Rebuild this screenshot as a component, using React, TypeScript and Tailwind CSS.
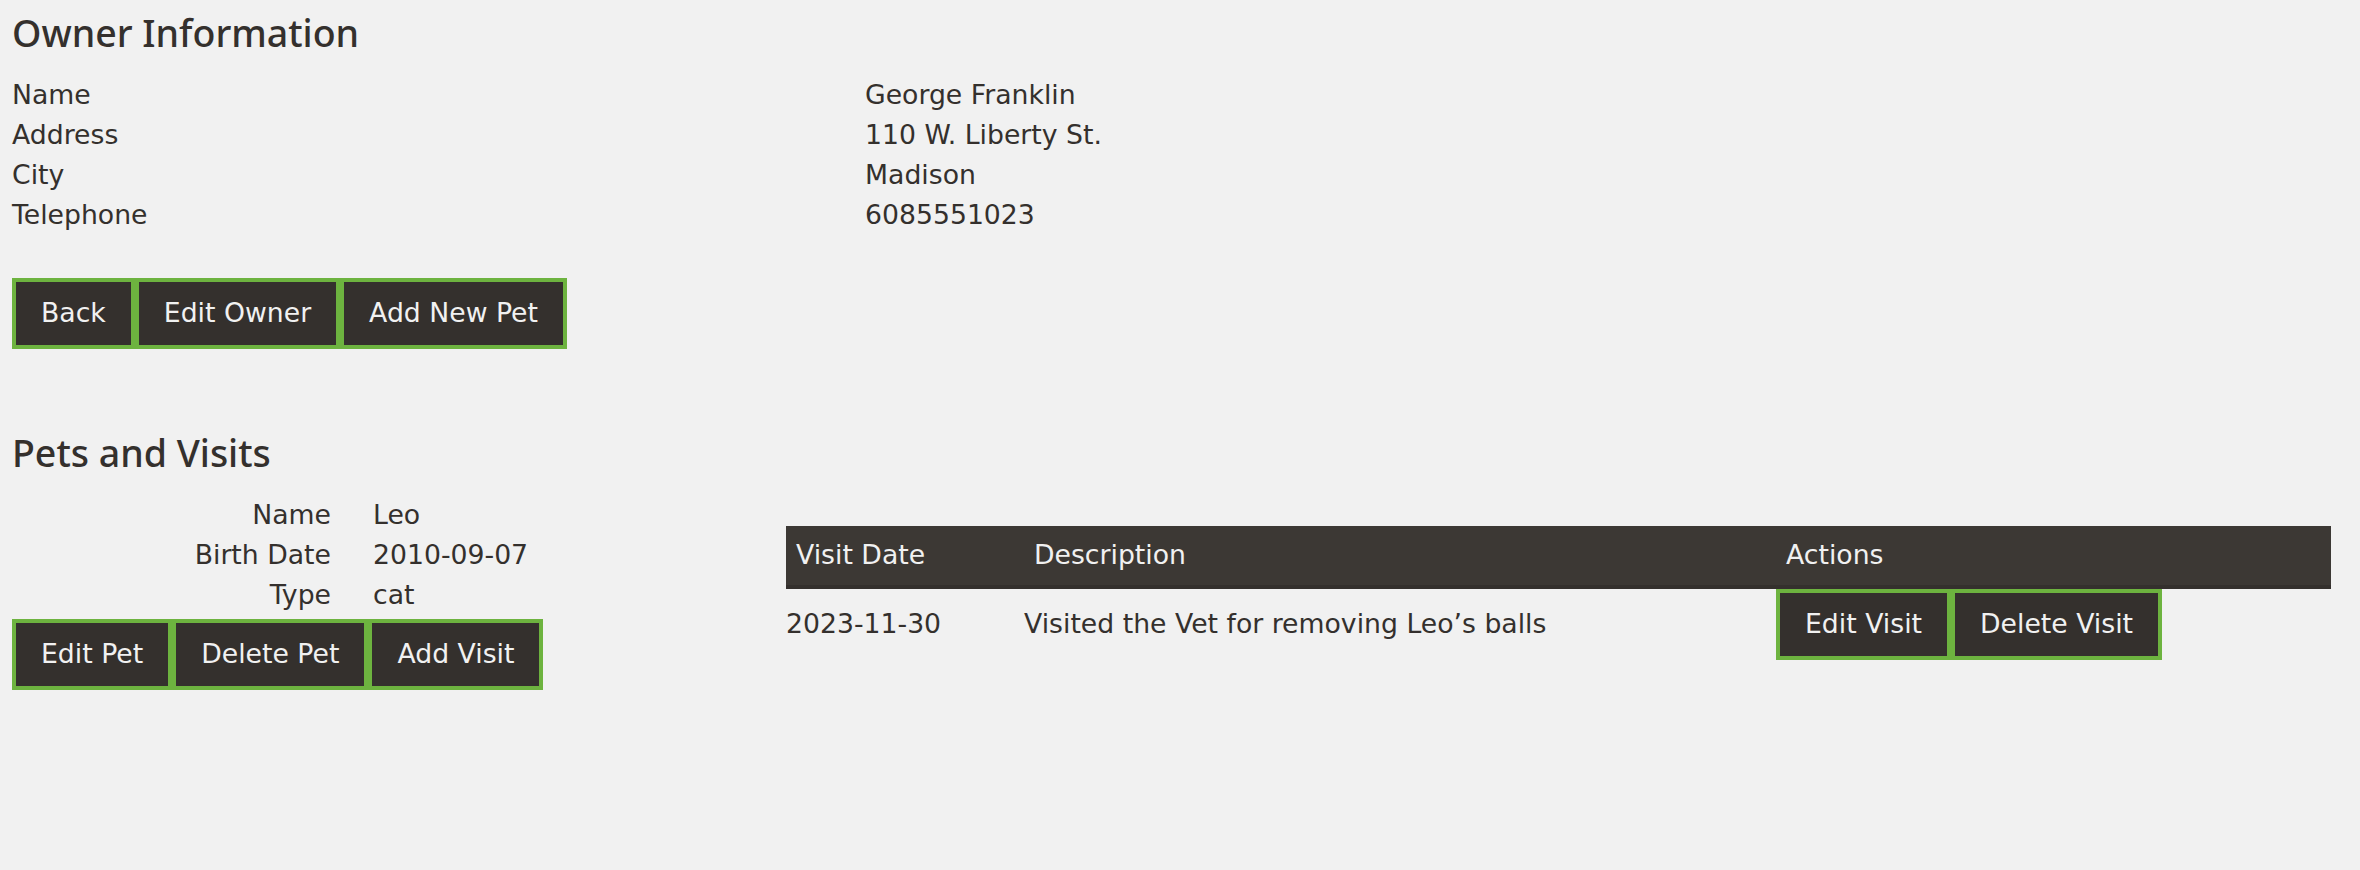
import type { ReactNode } from "react";

const owner = [
  ["Name", "George Franklin"],
  ["Address", "110 W. Liberty St."],
  ["City", "Madison"],
  ["Telephone", "6085551023"],
];

const pet = [
  ["Name", "Leo"],
  ["Birth Date", "2010-09-07"],
  ["Type", "cat"],
];

function Btn({ children }: { children: ReactNode }) {
  return (
    <button className="h-[71px] border-4 border-[#6db33f] bg-[#34302d] px-[25px] leading-none text-[#f1f1f1]">
      {children}
    </button>
  );
}

export default function App() {
  return (
    <div className="min-h-[870px] bg-[#f1f1f1] px-[12px] pt-[13px] font-['DejaVu_Sans',sans-serif] text-[26.7px] text-[#34302d]">
      {/* Owner */}
      <h2 className="font-['Noto_Sans',sans-serif] text-[37.5px] font-medium leading-[40px]">Owner Information</h2>
      <div className="mt-[22px] grid grid-cols-[853px_1fr] leading-[40px]">
        {owner.map(([label, value]) => (
          <div key={label} className="contents">
            <div>{label}</div>
            <div>{value}</div>
          </div>
        ))}
      </div>
      <div className="mt-[43px] flex">
        <Btn>Back</Btn>
        <Btn>Edit Owner</Btn>
        <Btn>Add New Pet</Btn>
      </div>

      {/* Pets and visits */}
      <h2 className="mt-[84px] font-['Noto_Sans',sans-serif] text-[37.5px] font-medium leading-[40px]">Pets and Visits</h2>
      <div className="mt-[22px] flex items-start">
        <div className="w-[774px] shrink-0">
          <div className="grid grid-cols-[319px_1fr] gap-x-[42px] leading-[40px]">
            {pet.map(([label, value]) => (
              <div key={label} className="contents">
                <div className="text-right">{label}</div>
                <div>{value}</div>
              </div>
            ))}
          </div>
          <div className="mt-[4px] flex">
            <Btn>Edit Pet</Btn>
            <Btn>Delete Pet</Btn>
            <Btn>Add Visit</Btn>
          </div>
        </div>

        <table className="mt-[31px] w-[1545px] table-fixed border-collapse text-left">
          <colgroup>
            <col className="w-[238px]" />
            <col className="w-[752px]" />
            <col className="w-[555px]" />
          </colgroup>
          <thead>
            <tr className="h-[61px] border-b-[4px] border-[#34302d] bg-[#3c3834] text-[#f1f1f1]">
              <th className="pl-[10px] font-normal">Visit Date</th>
              <th className="pl-[10px] font-normal">Description</th>
              <th className="pl-[10px] font-normal">Actions</th>
            </tr>
          </thead>
          <tbody>
            <tr>
              <td className="p-0">2023-11-30</td>
              <td className="p-0">Visited the Vet for removing Leo’s balls</td>
              <td className="p-0">
                <div className="flex">
                  <Btn>Edit Visit</Btn>
                  <Btn>Delete Visit</Btn>
                </div>
              </td>
            </tr>
          </tbody>
        </table>
      </div>
    </div>
  );
}
